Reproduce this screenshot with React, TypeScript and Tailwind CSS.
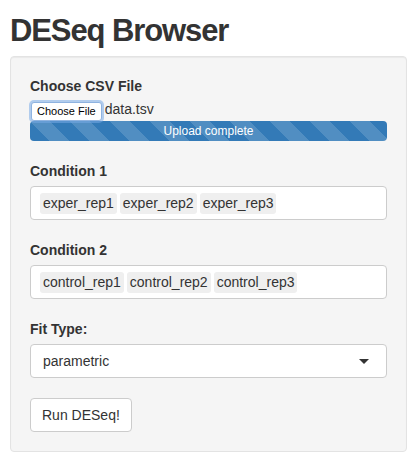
import React from 'react';

const CONDITION_1 = ['exper_rep1', 'exper_rep2', 'exper_rep3'];
const CONDITION_2 = ['control_rep1', 'control_rep2', 'control_rep3'];

function Label({ children }: { children: React.ReactNode }) {
  return <div className="text-[14px] leading-[20px] font-bold text-[#333] mb-[5px]">{children}</div>;
}

function TagInput({ items }: { items: string[] }) {
  return (
    <div className="h-[34px] bg-white border border-[#cccccc] rounded-[4px] pl-[9px] flex items-center gap-[3px]">
      {items.map((item) => (
        <span key={item} className="h-[21px] px-[3px] bg-[#efefef] rounded-[3px] text-[14px] leading-[21px] text-[#333]">
          {item}
        </span>
      ))}
    </div>
  );
}

export default function App() {
  return (
    <div className="px-[10px] bg-white min-h-[461px] font-['Liberation_Sans',Arial,sans-serif] text-[#333]">
      <h2 className="pt-[14px] text-[31px] leading-[34px] font-bold tracking-[-1.1px] mb-[8px]">DESeq Browser</h2>

      <div className="bg-[#f5f5f5] border border-[#e3e3e3] rounded-[4px] p-[19px] shadow-[inset_0_1px_1px_rgba(0,0,0,0.05)]">
        {/* File upload */}
        <div className="mb-[20px]">
          <div className="text-[14px] leading-[20px] font-bold mb-[6px]">Choose CSV File</div>
          <div className="flex items-start h-[19px] pl-[1px]">
            <button className="h-[19px] px-[5px] bg-white border border-[#8fb3e0] rounded-[3px] shadow-[0_0_0_2px_rgba(120,170,230,0.55)] text-[11px] leading-[17px] text-black">
              Choose File
            </button>
            <span className="ml-[3px] text-[14px] leading-[14px]">data.tsv</span>
          </div>
          <div className="h-[20px] rounded-[4px] bg-[#337ab7] bg-[linear-gradient(45deg,rgba(255,255,255,.15)_25%,transparent_25%,transparent_50%,rgba(255,255,255,.15)_50%,rgba(255,255,255,.15)_75%,transparent_75%,transparent)] bg-[length:40px_40px] text-center text-[12px] leading-[20px] font-medium text-white">
            Upload complete
          </div>
        </div>

        <div className="mb-[20px]">
          <Label>Condition 1</Label>
          <TagInput items={CONDITION_1} />
        </div>

        <div className="mb-[20px]">
          <Label>Condition 2</Label>
          <TagInput items={CONDITION_2} />
        </div>

        <div className="mb-[20px]">
          <Label>Fit Type:</Label>
          <div className="h-[34px] bg-white border border-[#cccccc] rounded-[4px] pl-[12px] pr-[17px] flex items-center justify-between">
            <span className="text-[14px]">parametric</span>
            <svg width="10" height="5" viewBox="0 0 10 5">
              <polygon points="0,0 10,0 5,5" fill="#333" />
            </svg>
          </div>
        </div>

        <button className="h-[34px] px-[11px] bg-white border border-[#cccccc] rounded-[4px] text-[14px] text-[#333]">
          Run DESeq!
        </button>
      </div>
    </div>
  );
}
